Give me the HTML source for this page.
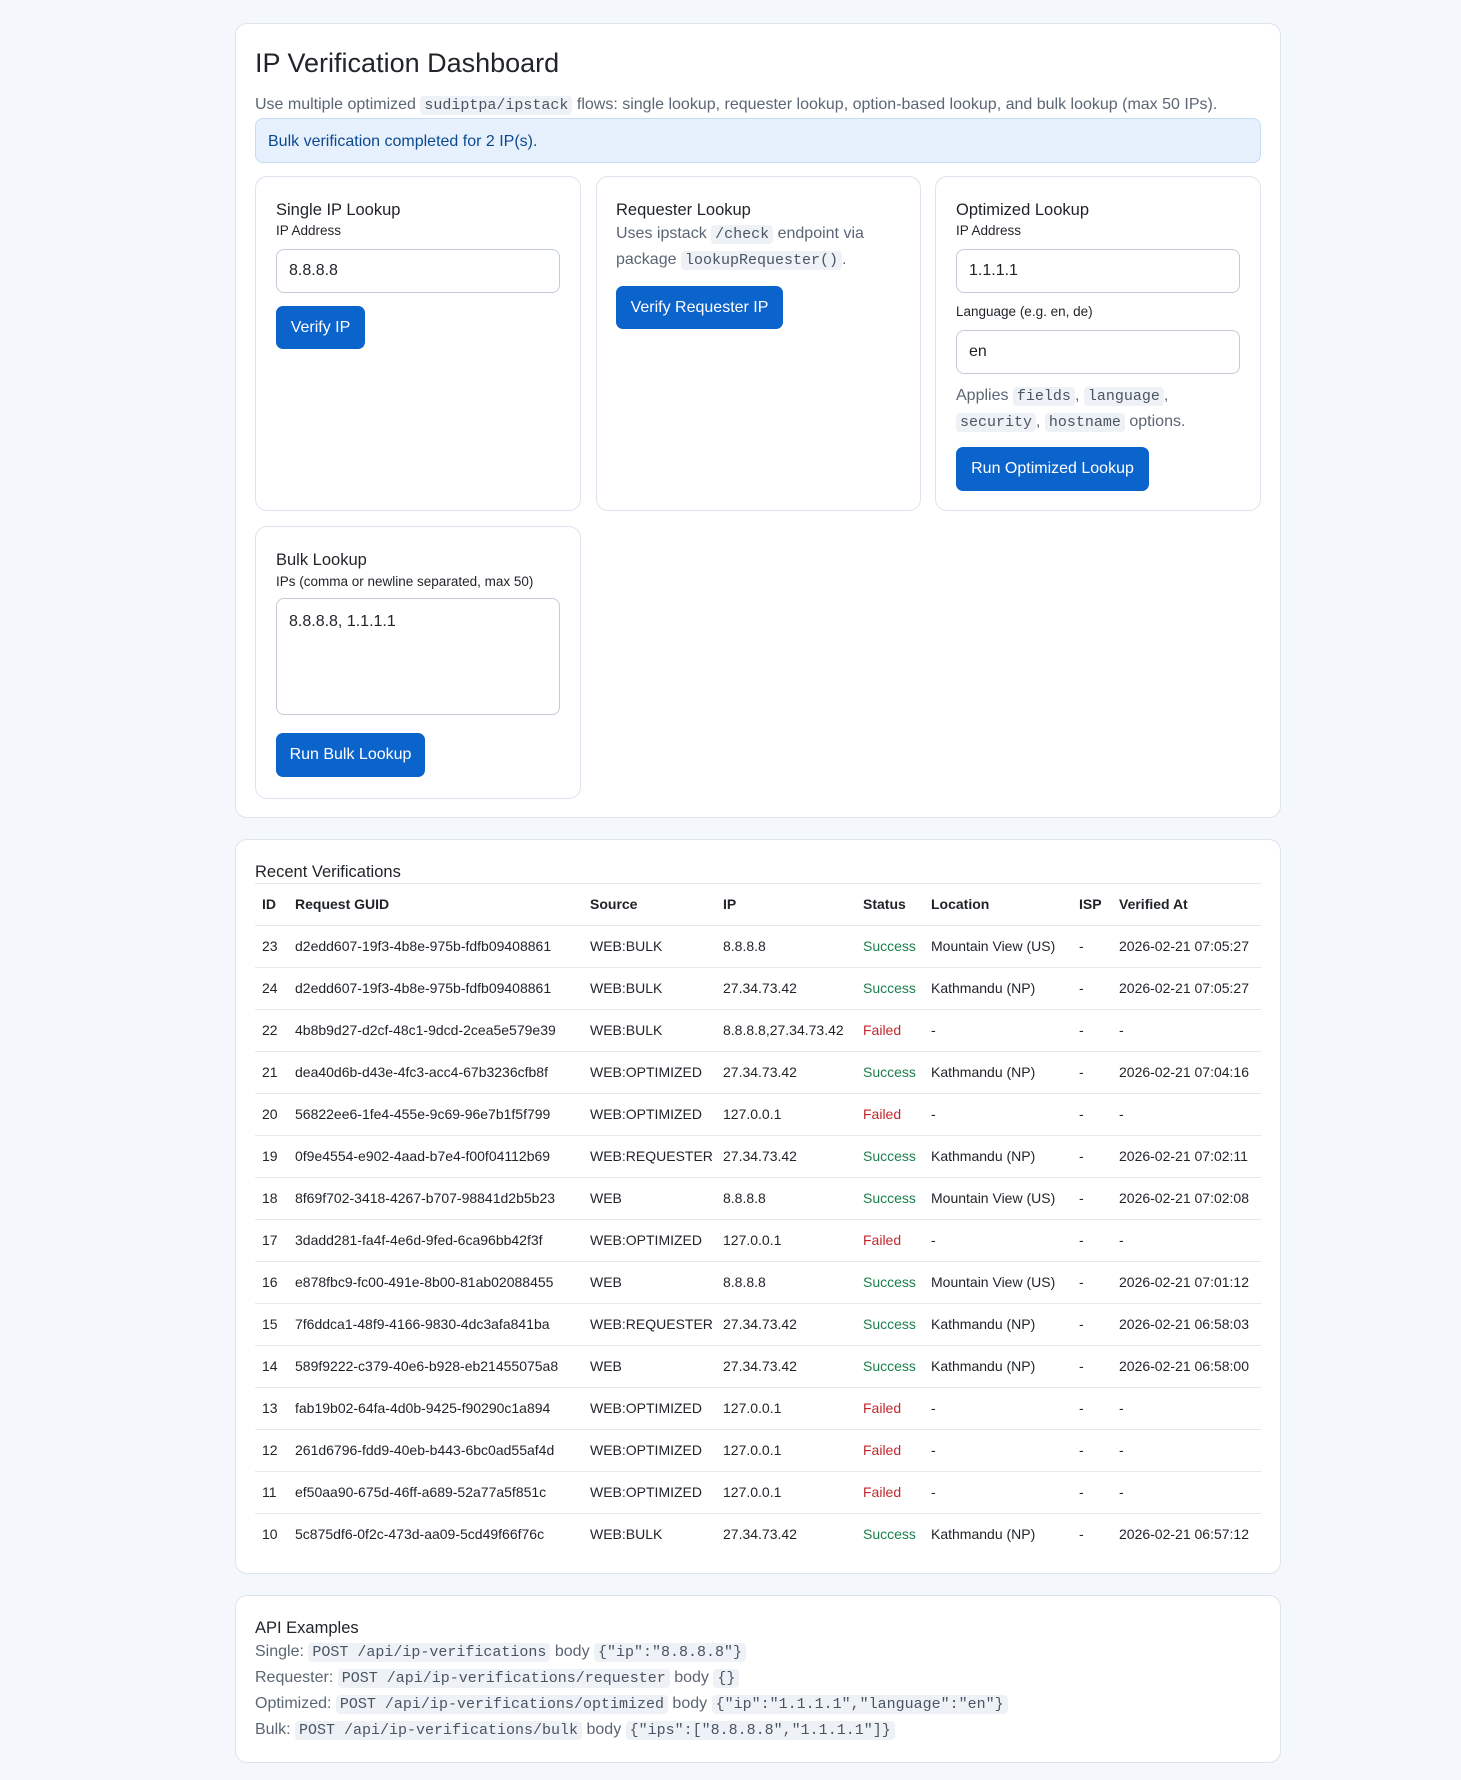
<!DOCTYPE html>
<html><head><meta charset="utf-8"><style>
*{box-sizing:border-box;margin:0;padding:0}
body{width:1461px;height:1780px;background:#f4f7fb;font-family:"Liberation Sans",sans-serif;color:#1f2328;position:relative;overflow:hidden}
.a{position:absolute;white-space:nowrap}
.card{position:absolute;background:#fff;border:1px solid #dde4ee;border-radius:12px}
.in{position:absolute;border:1px solid #c3ccd8;border-radius:8px;background:#fff;font-size:16px;padding-left:12px;display:flex;align-items:center}
.btn{position:absolute;background:#0b63cc;color:#fff;border-radius:7px;font-size:16px;display:flex;align-items:center;justify-content:center}
code{font-family:"Liberation Mono",monospace;background:#eef2f6;border-radius:4px;padding:1px 4px;font-size:15px;color:#4a5563}
.h{font-size:16.5px;line-height:20px}
.lbl{font-size:13.5px;line-height:18px}
.m{color:#5b6675;font-size:16px;line-height:26px}
table{position:absolute;left:255px;top:883px;width:1006px;border-collapse:collapse;font-size:14px}
th{text-align:left;font-weight:bold;height:42px;padding:0 0 0 7px;border-bottom:1px solid #e3e8ef}
td{height:42px;padding:0 0 0 7px;border-bottom:1px solid #e6eaf0}
tr:last-child td{border-bottom:none}
.s{color:#1a7f4b}.f{color:#c2272d}
</style></head><body>
<div class="card" style="left:235px;top:23px;width:1046px;height:795px"></div>
<div class="a" style="left:255px;top:47px;font-size:27px;line-height:32px;color:#212529">IP Verification Dashboard</div>
<div class="a m" style="left:255px;top:92px;line-height:26px">Use multiple optimized <code>sudiptpa/ipstack</code> flows: single lookup, requester lookup, option-based lookup, and bulk lookup (max 50 IPs).</div>
<div class="a" style="left:255px;top:118px;width:1006px;height:45px;background:#e7f1fd;border:1px solid #c5dbf6;border-radius:8px;color:#0c4a8f;font-size:16px;line-height:45px;padding-left:12px">Bulk verification completed for 2 IP(s).</div>

<div class="card" style="left:255px;top:176px;width:326px;height:335px"></div>
<div class="a h" style="left:276px;top:200px">Single IP Lookup</div>
<div class="a lbl" style="left:276px;top:222px">IP Address</div>
<div class="in" style="left:276px;top:249px;width:284px;height:44px">8.8.8.8</div>
<div class="btn" style="left:276px;top:306px;width:89px;height:43px">Verify IP</div>

<div class="card" style="left:596px;top:176px;width:325px;height:335px"></div>
<div class="a h" style="left:616px;top:200px">Requester Lookup</div>
<div class="a m" style="left:616px;top:221px">Uses ipstack <code>/check</code> endpoint via</div>
<div class="a m" style="left:616px;top:247px">package <code>lookupRequester()</code>.</div>
<div class="btn" style="left:616px;top:286px;width:167px;height:43px">Verify Requester IP</div>

<div class="card" style="left:935px;top:176px;width:326px;height:335px"></div>
<div class="a h" style="left:956px;top:200px">Optimized Lookup</div>
<div class="a lbl" style="left:956px;top:222px">IP Address</div>
<div class="in" style="left:956px;top:249px;width:284px;height:44px">1.1.1.1</div>
<div class="a lbl" style="left:956px;top:303px">Language (e.g. en, de)</div>
<div class="in" style="left:956px;top:330px;width:284px;height:44px">en</div>
<div class="a m" style="left:956px;top:383px">Applies <code>fields</code>, <code>language</code>,</div>
<div class="a m" style="left:956px;top:409px"><code>security</code>, <code>hostname</code> options.</div>
<div class="btn" style="left:956px;top:447px;width:193px;height:44px">Run Optimized Lookup</div>

<div class="card" style="left:255px;top:526px;width:326px;height:273px"></div>
<div class="a h" style="left:276px;top:550px">Bulk Lookup</div>
<div class="a lbl" style="left:276px;top:573px">IPs (comma or newline separated, max 50)</div>
<div class="in" style="left:276px;top:598px;width:284px;height:117px;align-items:flex-start;padding-top:14px">8.8.8.8, 1.1.1.1</div>
<div class="btn" style="left:276px;top:733px;width:149px;height:44px">Run Bulk Lookup</div>

<div class="card" style="left:235px;top:839px;width:1046px;height:735px"></div>
<div class="a h" style="left:255px;top:862px">Recent Verifications</div>
<div class="a" style="left:255px;top:883px;width:1006px;height:1px;background:#e3e8ef"></div>
<table>
<colgroup><col style="width:33px"><col style="width:295px"><col style="width:133px"><col style="width:140px"><col style="width:68px"><col style="width:148px"><col style="width:40px"><col></colgroup>
<tr><th>ID</th><th>Request GUID</th><th>Source</th><th>IP</th><th>Status</th><th>Location</th><th>ISP</th><th>Verified At</th></tr>
<tr><td>23</td><td>d2edd607-19f3-4b8e-975b-fdfb09408861</td><td>WEB:BULK</td><td>8.8.8.8</td><td class="s">Success</td><td>Mountain View (US)</td><td>-</td><td>2026-02-21 07:05:27</td></tr>
<tr><td>24</td><td>d2edd607-19f3-4b8e-975b-fdfb09408861</td><td>WEB:BULK</td><td>27.34.73.42</td><td class="s">Success</td><td>Kathmandu (NP)</td><td>-</td><td>2026-02-21 07:05:27</td></tr>
<tr><td>22</td><td>4b8b9d27-d2cf-48c1-9dcd-2cea5e579e39</td><td>WEB:BULK</td><td>8.8.8.8,27.34.73.42</td><td class="f">Failed</td><td>-</td><td>-</td><td>-</td></tr>
<tr><td>21</td><td>dea40d6b-d43e-4fc3-acc4-67b3236cfb8f</td><td>WEB:OPTIMIZED</td><td>27.34.73.42</td><td class="s">Success</td><td>Kathmandu (NP)</td><td>-</td><td>2026-02-21 07:04:16</td></tr>
<tr><td>20</td><td>56822ee6-1fe4-455e-9c69-96e7b1f5f799</td><td>WEB:OPTIMIZED</td><td>127.0.0.1</td><td class="f">Failed</td><td>-</td><td>-</td><td>-</td></tr>
<tr><td>19</td><td>0f9e4554-e902-4aad-b7e4-f00f04112b69</td><td>WEB:REQUESTER</td><td>27.34.73.42</td><td class="s">Success</td><td>Kathmandu (NP)</td><td>-</td><td>2026-02-21 07:02:11</td></tr>
<tr><td>18</td><td>8f69f702-3418-4267-b707-98841d2b5b23</td><td>WEB</td><td>8.8.8.8</td><td class="s">Success</td><td>Mountain View (US)</td><td>-</td><td>2026-02-21 07:02:08</td></tr>
<tr><td>17</td><td>3dadd281-fa4f-4e6d-9fed-6ca96bb42f3f</td><td>WEB:OPTIMIZED</td><td>127.0.0.1</td><td class="f">Failed</td><td>-</td><td>-</td><td>-</td></tr>
<tr><td>16</td><td>e878fbc9-fc00-491e-8b00-81ab02088455</td><td>WEB</td><td>8.8.8.8</td><td class="s">Success</td><td>Mountain View (US)</td><td>-</td><td>2026-02-21 07:01:12</td></tr>
<tr><td>15</td><td>7f6ddca1-48f9-4166-9830-4dc3afa841ba</td><td>WEB:REQUESTER</td><td>27.34.73.42</td><td class="s">Success</td><td>Kathmandu (NP)</td><td>-</td><td>2026-02-21 06:58:03</td></tr>
<tr><td>14</td><td>589f9222-c379-40e6-b928-eb21455075a8</td><td>WEB</td><td>27.34.73.42</td><td class="s">Success</td><td>Kathmandu (NP)</td><td>-</td><td>2026-02-21 06:58:00</td></tr>
<tr><td>13</td><td>fab19b02-64fa-4d0b-9425-f90290c1a894</td><td>WEB:OPTIMIZED</td><td>127.0.0.1</td><td class="f">Failed</td><td>-</td><td>-</td><td>-</td></tr>
<tr><td>12</td><td>261d6796-fdd9-40eb-b443-6bc0ad55af4d</td><td>WEB:OPTIMIZED</td><td>127.0.0.1</td><td class="f">Failed</td><td>-</td><td>-</td><td>-</td></tr>
<tr><td>11</td><td>ef50aa90-675d-46ff-a689-52a77a5f851c</td><td>WEB:OPTIMIZED</td><td>127.0.0.1</td><td class="f">Failed</td><td>-</td><td>-</td><td>-</td></tr>
<tr><td>10</td><td>5c875df6-0f2c-473d-aa09-5cd49f66f76c</td><td>WEB:BULK</td><td>27.34.73.42</td><td class="s">Success</td><td>Kathmandu (NP)</td><td>-</td><td>2026-02-21 06:57:12</td></tr>
</table>

<div class="card" style="left:235px;top:1595px;width:1046px;height:168px"></div>
<div class="a h" style="left:255px;top:1618px">API Examples</div>
<div class="a m" style="left:255px;top:1639px">Single: <code>POST /api/ip-verifications</code> body <code>{"ip":"8.8.8.8"}</code></div>
<div class="a m" style="left:255px;top:1665px">Requester: <code>POST /api/ip-verifications/requester</code> body <code>{}</code></div>
<div class="a m" style="left:255px;top:1691px">Optimized: <code>POST /api/ip-verifications/optimized</code> body <code>{"ip":"1.1.1.1","language":"en"}</code></div>
<div class="a m" style="left:255px;top:1717px">Bulk: <code>POST /api/ip-verifications/bulk</code> body <code>{"ips":["8.8.8.8","1.1.1.1"]}</code></div>
</body></html>
